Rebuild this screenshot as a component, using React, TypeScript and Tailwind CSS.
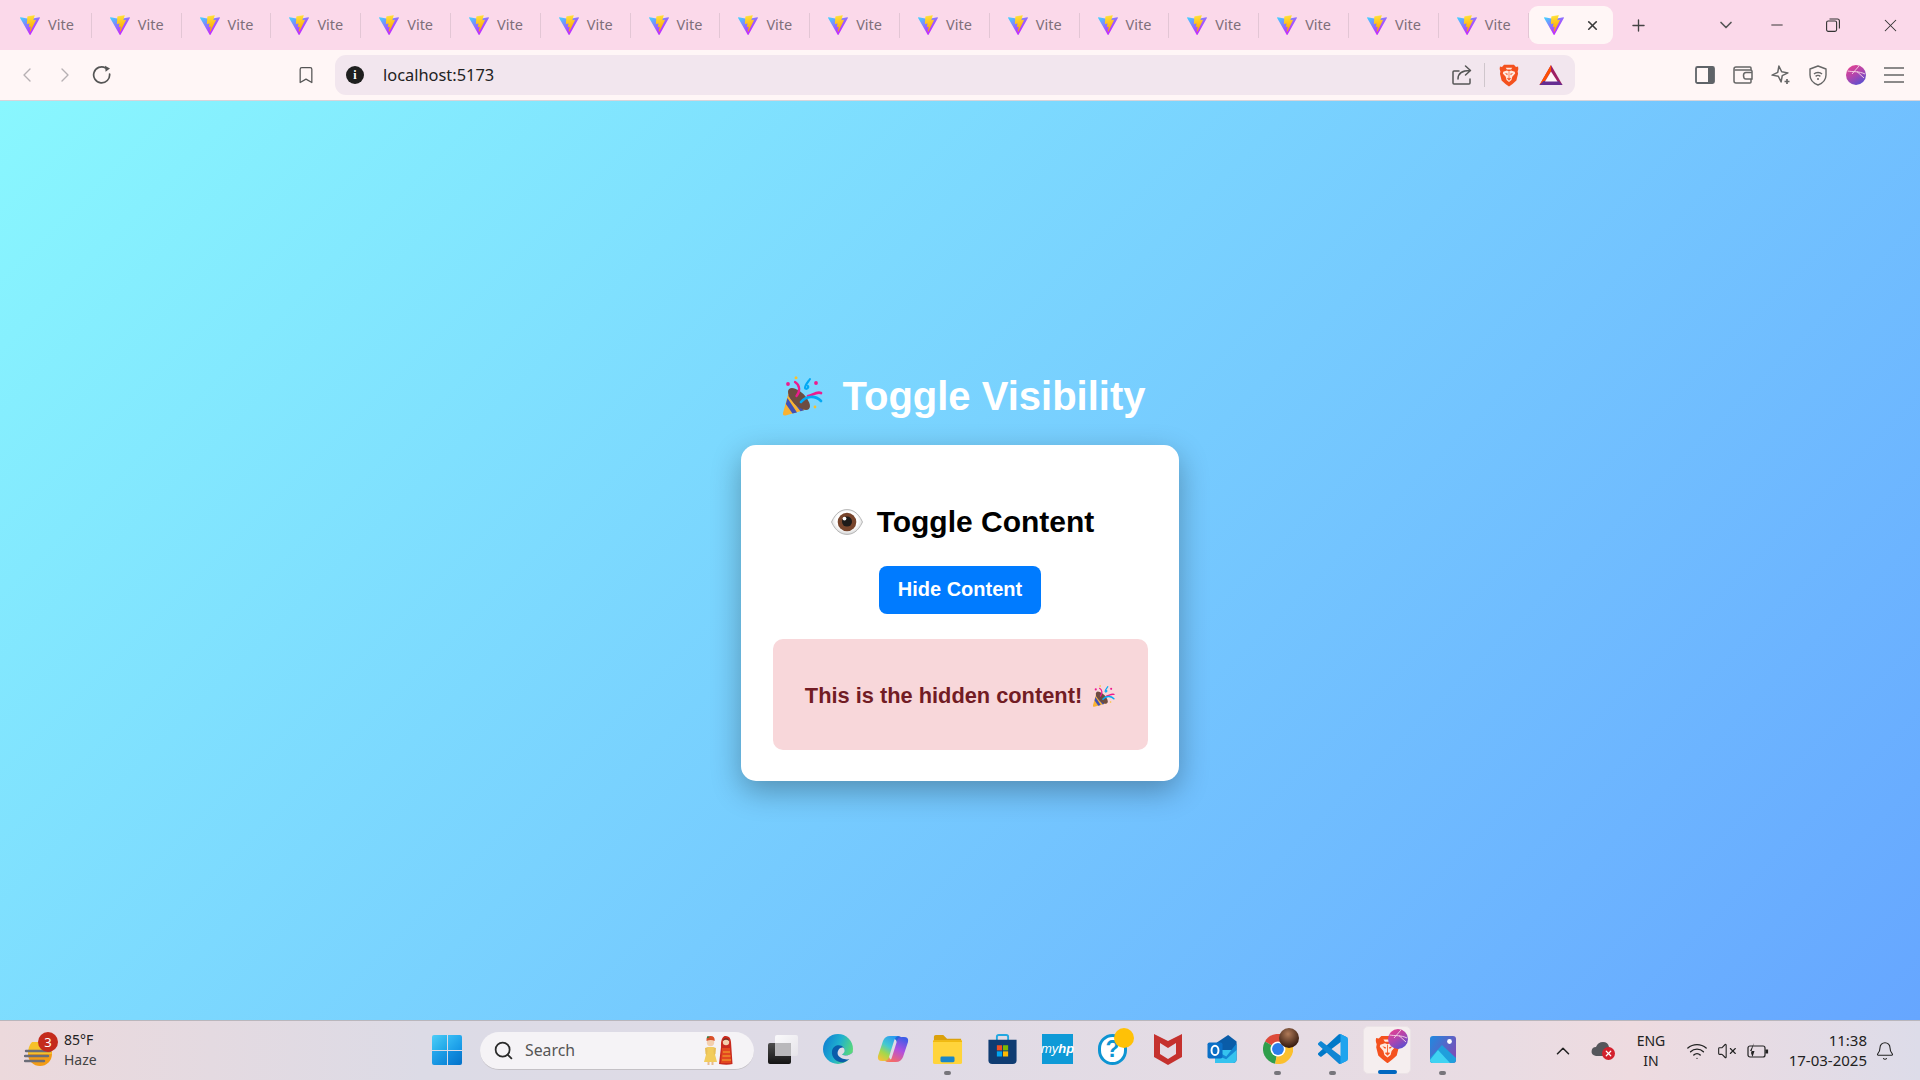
import React, { useId } from "react";
import { Bookmark, ChevronDown, ChevronLeft, ChevronRight, ChevronUp, Minus, Plus, Search, X, Bell, VolumeX, Wifi } from "lucide-react";

function ViteLogo({ size = 20 }: { size?: number }) {
  const id = useId();
  return (
    <svg width={size} height={size} viewBox="0 0 256 257" className="shrink-0">
      <defs>
        <linearGradient id={id + "a"} x1="-.828%" y1="7.652%" x2="57.636%" y2="78.411%">
          <stop offset="0" stopColor="#41D1FF" />
          <stop offset="1" stopColor="#BD34FE" />
        </linearGradient>
        <linearGradient id={id + "b"} x1="43.376%" y1="2.242%" x2="50.316%" y2="89.03%">
          <stop offset="0" stopColor="#FFEA83" />
          <stop offset=".083" stopColor="#FFDD35" />
          <stop offset="1" stopColor="#FFA800" />
        </linearGradient>
      </defs>
      <path fill={`url(#${id}a)`} d="M255.153 37.938 134.897 252.976c-2.483 4.44-8.862 4.466-11.382.048L.875 37.958c-2.746-4.814 1.371-10.646 6.827-9.67l120.385 21.517a6.537 6.537 0 0 0 2.322-.004l117.867-21.483c5.438-.991 9.574 4.796 6.877 9.62Z" />
      <path fill={`url(#${id}b)`} d="M185.432.063 96.44 17.501a3.268 3.268 0 0 0-2.634 3.014l-5.474 92.456a3.268 3.268 0 0 0 3.997 3.378l24.777-5.718c2.318-.535 4.413 1.507 3.936 3.838l-7.361 36.047c-.495 2.426 1.782 4.5 4.151 3.78l15.304-4.649c2.372-.72 4.652 1.36 4.15 3.788l-11.698 56.621c-.732 3.542 3.979 5.473 5.943 2.437l1.313-2.028 72.516-144.72c1.215-2.423-.88-5.186-3.54-4.672l-25.505 4.922c-2.396.462-4.435-1.77-3.759-4.114l16.646-57.705c.677-2.35-1.37-4.583-3.769-4.113Z" />
    </svg>
  );
}

function PartyEmoji({ size = 40 }: { size?: number }) {
  return (
    <svg width={size} height={size} viewBox="0 0 40 40" className="shrink-0">
      <path d="M6 15 L25 33 L2.5 39.5 Q-.5 40 0 37 Z" fill="#f9b233" />
      <path d="M4.4 22 L14 36.4 L9.5 37.6 L2.9 28 Z M7 16 L21 34.2 L17.5 35.3 L5.4 20 Z" fill="#3f51b5" />
      <ellipse cx="16" cy="23" rx="14" ry="6.6" transform="rotate(45 16 23)" fill="#6d4c41" />
      <path d="M12 6 C17 9 17.5 15 13.5 20" fill="none" stroke="#ec1c8e" strokeWidth="2.3" strokeLinecap="round" />
      <path d="M27 3 C25 6 22 9 22 12 C23 14 26 12 25 10" fill="none" stroke="#03a9f4" strokeWidth="2.1" strokeLinecap="round" />
      <path d="M25 20 C29 20 33 15 38 17" fill="none" stroke="#ec1c8e" strokeWidth="2.7" strokeLinecap="round" />
      <path d="M18 26 C23 20 32 19 38 25" fill="none" stroke="#03a9f4" strokeWidth="2.7" strokeLinecap="round" />
      <circle cx="5" cy="8" r="1.9" fill="#ec1c8e" />
      <circle cx="33" cy="7" r="1.9" fill="#ec1c8e" />
      <circle cx="13" cy="1.8" r="1.5" fill="#fbc02d" />
      <circle cx="32" cy="31" r="1.4" fill="#fbc02d" />
    </svg>
  );
}

function EyeEmoji() {
  return (
    <svg width="32" height="26" viewBox="0 0 32 26" className="shrink-0">
      <defs>
        <radialGradient id="eyeball" cx="50%" cy="45%" r="60%">
          <stop offset="0.6" stopColor="#ffffff" />
          <stop offset="1" stopColor="#c9c9c9" />
        </radialGradient>
      </defs>
      <path d="M.5 13 C5 3 11 .6 16 .6 C21 .6 27 3 31.5 13 C27 23 21 25.4 16 25.4 C11 25.4 5 23 .5 13 Z" fill="url(#eyeball)" stroke="#a8a8a8" strokeWidth=".8" />
      <circle cx="16" cy="13" r="9.3" fill="#78452c" />
      <circle cx="16" cy="12.6" r="5" fill="#1d1a19" />
      <circle cx="13.5" cy="9.6" r="1.9" fill="#fff" />
    </svg>
  );
}

function Tab() {
  return (
    <div className="w-[89.8px] h-[25px] shrink-0 flex items-center pl-[18px] border-r border-[#e3c6d5] font-['Noto_Sans',sans-serif]">
      <ViteLogo />
      <span className="ml-[8px] text-[14.5px] text-[#7d6f79]">Vite</span>
    </div>
  );
}

function BraveLion({ size = 24 }: { size?: number }) {
  return (
    <svg width={size} height={size * 1.15} viewBox="0 0 24 28" className="shrink-0">
      <path d="M6 1 H18 L20.5 3.5 L23 3 Q24 6 22.5 9 L23 12 L21 20 Q17 24 12 27.5 Q7 24 3 20 L1 12 L1.5 9 Q0 6 1 3 L3.5 3.5 Z" fill="#f4511e" />
      <path d="M5 9.5 L9.5 8 L12 9 L14.5 8 L19 9.5 L19.5 11.5 L16 15.5 L15 19.5 L12 22 L9 19.5 L8 15.5 L4.5 11.5 Z" fill="#ffe9df" />
      <path d="M8 4.5 L16 4.5 L14.5 6.6 L9.5 6.6 Z" fill="#ffe9df" />
      <path d="M7 11 L10.5 12 L9.8 13.6 Z M17 11 L13.5 12 L14.2 13.6 Z" fill="#f4511e" />
      <path d="M10 17.5 L14 17.5 L12 19.8 Z M12 9.5 V17.5" fill="#f4511e" stroke="#f4511e" strokeWidth=".8" />
    </svg>
  );
}

function BatIcon() {
  return (
    <svg width="24" height="22" viewBox="0 0 24 22" className="shrink-0">
      <path d="M12 1 L23.5 21 L.5 21 Z" fill="#9e1f63" />
      <path d="M12 1 L.5 21 L5.5 18 L12 7 Z" fill="#ff5000" />
      <path d="M.5 21 L23.5 21 L19.5 17 L4.5 17 Z" fill="#662d91" />
      <path d="M12 7.5 L18.5 17.5 L6 17.5 Z" fill="#fff6f6" />
    </svg>
  );
}

function SphereAvatar({ size }: { size: number }) {
  const id = useId();
  return (
    <svg width={size} height={size} viewBox="0 0 20 20" className="shrink-0">
      <defs>
        <linearGradient id={id} x1="0.1" y1="0" x2="0.7" y2="1">
          <stop offset="0" stopColor="#e8408e" />
          <stop offset=".5" stopColor="#b245ad" />
          <stop offset="1" stopColor="#5a4fd0" />
        </linearGradient>
      </defs>
      <circle cx="10" cy="10" r="10" fill={`url(#${id})`} />
      <path d="M1.5 6 C7 7 13 6 19 9 M13 1 C11 4 8 6 6 9 M11 6.6 L18 13" stroke="#f6d9e6" strokeWidth=".9" fill="none" />
    </svg>
  );
}

function TopBar() {
  return (
    <div className="h-[50px] bg-[#fbd9ea] flex items-center pl-[2px] shrink-0">
      {Array.from({ length: 17 }, (_, i) => (
        <Tab key={i} />
      ))}
      <div className="w-[84px] h-[38px] rounded-[9px] bg-[#fff6f6] flex items-center pl-[15px] shrink-0">
        <ViteLogo />
        <X size={15} strokeWidth={2.6} className="ml-[21px] text-[#3a3a3a]" />
      </div>
      <Plus size={19} strokeWidth={1.7} className="ml-[16px] text-[#444]" />
      <ChevronDown size={20} strokeWidth={2} className="ml-[68px] text-[#555]" />
      <Minus size={18} strokeWidth={1.3} className="ml-[32px] text-[#333]" />
      <svg width="14" height="14" viewBox="0 0 14 14" className="ml-[40px] text-[#333]" fill="none" stroke="currentColor" strokeWidth="1.1">
        <rect x=".6" y="3" width="10" height="10.4" rx="1.6" />
        <path d="M3.5 1 H11.5 Q13.4 1 13.4 3 V10.5" />
      </svg>
      <X size={21} strokeWidth={1.2} className="ml-[40px] text-[#333]" />
    </div>
  );
}

function Toolbar() {
  return (
    <div className="h-[51px] bg-[#fff6f6] border-b border-[#d8d4da] flex items-center shrink-0">
      <ChevronLeft size={24} strokeWidth={1.4} className="ml-[15px] text-[#b6b0b3]" />
      <ChevronRight size={24} strokeWidth={1.4} className="ml-[14px] text-[#b6b0b3]" />
      <svg width="20" height="20" viewBox="0 0 20 20" className="ml-[15px]" fill="none" stroke="#555" strokeWidth="1.7">
        <path d="M17.6 9 A8 8 0 1 1 13.6 2.9" strokeLinecap="round" />
        <path d="M13 .8 L18 3.6 L13.6 6.8 Z" fill="#555" stroke="none" />
      </svg>
      <Bookmark size={20} strokeWidth={1.5} className="ml-[184px] text-[#555]" />
      <div className="ml-[19px] w-[1240px] h-[40px] rounded-[11px] bg-[#f2e6ee] flex items-center">
        <div className="ml-[11px] w-[18px] h-[18px] rounded-full bg-[#1f1f1f] flex items-center justify-center text-white text-[12px] font-bold font-['Liberation_Serif']">i</div>
        <span className="ml-[19px] text-[16.4px] text-[#222] font-['Noto_Sans',sans-serif]">localhost:5173</span>
        <div className="ml-auto flex items-center">
          <svg width="20" height="22" viewBox="0 0 20 22" fill="none" stroke="#555" strokeWidth="1.5">
            <path d="M7 7 H2 Q1 7 1 8 V19 Q1 20 2 20 H17 Q18 20 18 19 V15" strokeLinecap="round" />
            <path d="M6 15 C6 9 10 6.5 18 6.5 M13.5 2 L18.5 6.5 L13.5 11" strokeLinecap="round" strokeLinejoin="round" />
          </svg>
          <div className="w-px h-[24px] bg-[#cfc6cc] ml-[12px] mr-[14px]" />
          <BraveLion size={20} />
          <div className="ml-[20px] mr-[12px]"><BatIcon /></div>
        </div>
      </div>
      <svg width="20" height="20" viewBox="0 0 20 20" className="ml-[120px]" fill="none">
        <rect x="1" y="2" width="18" height="16" rx="1.5" stroke="#5f6368" strokeWidth="1.8" />
        <rect x="13" y="2" width="6" height="16" fill="#5f6368" />
      </svg>
      <svg width="20" height="20" viewBox="0 0 20 20" className="ml-[18px]" fill="none" stroke="#666" strokeWidth="1.5">
        <path d="M18 5 V3 Q18 2 17 2 H3 Q1 2 1 4 V16 Q1 18 3 18 H17 Q18 18 18 17 V14" />
        <path d="M1.5 5 H17 Q19 5 19 6 V14 H13 Q10.5 14 10.5 10.5 Q10.5 7.5 13 7.5 H19" />
      </svg>
      <svg width="20" height="22" viewBox="0 0 20 22" className="ml-[18px]" fill="none" stroke="#666" strokeWidth="1.5">
        <path d="M9 2 L11 8 L17 10 L11 12 L9 18 L7 12 L1 10 L7 8 Z" strokeLinejoin="round" transform="rotate(-8 9 10)" />
        <path d="M16 15 V20 M13.5 17.5 H18.5" strokeWidth="1.7" />
      </svg>
      <svg width="18" height="21" viewBox="0 0 18 21" className="ml-[18px]" fill="none" stroke="#666" strokeWidth="1.4">
        <path d="M9 1 L17 4 V10 C17 15 13 18.5 9 20 C5 18.5 1 15 1 10 V4 Z" strokeLinejoin="round" />
        <path d="M5 9 C7 7 11 7 13 9 M6.6 11.4 C8 10.2 10 10.2 11.4 11.4" />
        <circle cx="9" cy="14" r="1" fill="#666" stroke="none" />
      </svg>
      <div className="ml-[19px]"><SphereAvatar size={20} /></div>
      <svg width="20" height="18" viewBox="0 0 20 18" className="ml-[18px]" stroke="#666" strokeWidth="1.5">
        <path d="M0 2 H20 M0 9 H20 M0 16 H20" />
      </svg>
    </div>
  );
}

function Cell({ children, dot, active }: { children: React.ReactNode; dot?: boolean; active?: boolean }) {
  return (
    <div className="w-[55px] h-full shrink-0 relative flex items-center justify-center pb-[3px]">
      {active && <div className="absolute left-[3px] top-[5px] w-[48px] h-[48px] rounded-[5px] bg-[#f5eeef] border border-[#ebe3e6]" />}
      <div className="relative flex items-center justify-center">{children}</div>
      {dot && <div className="absolute left-[24px] top-[50px] w-[7px] h-[4px] rounded-full bg-[#77757b]" />}
      {active && <div className="absolute left-[18px] top-[49px] w-[19px] h-[4px] rounded-full bg-[#0067c0]" />}
    </div>
  );
}

function TaskViewIcon() {
  return (
    <svg width="30" height="29" viewBox="0 0 30 29">
      <defs>
        <linearGradient id="tvA" x1="0" y1="0" x2="1" y2="1">
          <stop offset="0" stopColor="#ffffff" />
          <stop offset="1" stopColor="#e7e5ea" />
        </linearGradient>
        <linearGradient id="tvB" x1="0" y1="0" x2="0" y2="1">
          <stop offset="0" stopColor="#4d4d4d" />
          <stop offset="1" stopColor="#141414" />
        </linearGradient>
      </defs>
      <rect x="0" y="8" width="23" height="21" rx="2" fill="url(#tvB)" />
      <rect x="7" y="0" width="23" height="21" rx="2" fill="url(#tvA)" opacity=".85" />
      <rect x="7" y="8" width="16" height="13" fill="#b9b8bb" />
    </svg>
  );
}

function EdgeIcon() {
  return (
    <svg width="30" height="30" viewBox="0 0 30 30">
      <defs>
        <linearGradient id="edgeA" x1="0" y1="0.2" x2="1" y2="0.6">
          <stop offset="0" stopColor="#0f7ed2" />
          <stop offset=".5" stopColor="#1fb0cf" />
          <stop offset="1" stopColor="#5fdc72" />
        </linearGradient>
      </defs>
      <circle cx="15" cy="15" r="15" fill="url(#edgeA)" />
      <path d="M30 17.5 C29 21 23 22.5 18.5 20.5 C21.5 19 22 15.5 20.5 13.5 C17.5 9.5 10 11 9 17 C8 23 13 28.5 20 28.5 C26 27 30 22 30 17.5 Z" fill="#0a5cab" />
      <path d="M16.5 14.5 C14.5 16.5 14.8 21 18.5 23 C22 24.7 27 24 30 21 L30 30 L18 30 C22 28 13 28 12 21 C11.7 18 13.5 15 16.5 14.5 Z" fill="#0b66b8" opacity="0" />
      <path d="M20.5 13.8 C22.5 16 21.8 19 18.8 20.6 C22.5 22.4 27.5 21.5 30 18 C30.2 21 29.5 23 28.5 24.5 C24 26.5 17 25 15 21 C13.5 18 16.5 12.5 20.5 13.8 Z" fill="#dedbe6" />
    </svg>
  );
}

function CopilotIcon() {
  return (
    <svg width="32" height="28" viewBox="0 0 32 28">
      <defs>
        <linearGradient id="copA" x1="0.7" y1="0" x2="0.2" y2="1">
          <stop offset="0" stopColor="#2a9df0" />
          <stop offset=".4" stopColor="#45c9d0" />
          <stop offset=".7" stopColor="#a5d84a" />
          <stop offset="1" stopColor="#f5c13a" />
        </linearGradient>
        <linearGradient id="copB" x1="0.7" y1="0" x2="0.3" y2="1">
          <stop offset="0" stopColor="#3b5de8" />
          <stop offset=".5" stopColor="#b04fe0" />
          <stop offset="1" stopColor="#f46a6a" />
        </linearGradient>
        <linearGradient id="copC" x1="0" y1="0" x2="1" y2="0">
          <stop offset="0" stopColor="#1f7be0" />
          <stop offset="1" stopColor="#2a55d8" />
        </linearGradient>
      </defs>
      <path d="M13 1 H21 Q24 1 25 4 L27 10 H21 L19 5 Z" fill="url(#copC)" />
      <path d="M19 27 H10 Q8 27 7 24 L6 20 H11 L13 24 Z" fill="#f08a5a" />
      <path d="M13 1 H21 Q18 2 17 6 L12 22 Q11 26 7 26 H5 Q0 26 1 21 L6 6 Q8 1 13 1 Z" fill="url(#copA)" />
      <path d="M19 27 H11 Q14 26 15 22 L20 6 Q21 2 25 2 H27 Q32 2 31 7 L26 22 Q24 27 19 27 Z" fill="url(#copB)" />
    </svg>
  );
}

function FolderIcon() {
  return (
    <svg width="31" height="30" viewBox="0 0 31 32">
      <path d="M1 3 Q1 1 3 1 H11 L15 5 H30 V12 H1 Z" fill="#dba10b" />
      <path d="M0 7 H31 V30 Q31 32 29 32 H2 Q0 32 0 30 Z" fill="#ffd43b" />
      <path d="M0 7 H31 V8.5 H0 Z" fill="#f0b90f" />
      <rect x="8" y="24" width="15" height="6" rx="1.5" fill="#1a86c8" />
    </svg>
  );
}

function StoreIcon() {
  return (
    <svg width="29" height="30" viewBox="0 0 30 32">
      <path d="M9 7 V3 Q9 1 11 1 H19 Q21 1 21 3 V7" fill="none" stroke="#22a7e0" strokeWidth="2" />
      <path d="M0 6 H30 V28 Q30 32 26 32 H4 Q0 32 0 28 Z" fill="#0f3c72" />
      <rect x="9" y="12" width="5.5" height="5.5" fill="#f25022" />
      <rect x="15.5" y="12" width="5.5" height="5.5" fill="#7fba00" />
      <rect x="9" y="18.5" width="5.5" height="5.5" fill="#00a4ef" />
      <rect x="15.5" y="18.5" width="5.5" height="5.5" fill="#ffb900" />
    </svg>
  );
}

function McAfeeIcon() {
  return (
    <svg width="28" height="32" viewBox="0 0 28 32">
      <path d="M0 1 L14 8 L28 1 V24 L14 32 L0 24 Z M6 10 V21 L14 26 L22 21 V10 L14 15 Z" fill="#c5312e" fillRule="evenodd" />
    </svg>
  );
}

function OutlookIcon() {
  return (
    <svg width="31" height="30" viewBox="0 0 32 32">
      <path d="M10 9 L22 1 L31 8 V27 Q31 31 27 31 H8 V14 Z" fill="#0a5ca8" />
      <path d="M8 17 H31 V27 Q31 31 27 31 H8 Z" fill="#35c3ef" />
      <path d="M8 17 L20 24 L31 10 V17 L20 27 L8 22 Z" fill="#1488d4" />
      <rect x="0" y="9" width="16" height="17" rx="2" fill="#0b6fc6" />
      <ellipse cx="8" cy="17.5" rx="3.7" ry="5" fill="none" stroke="#fff" strokeWidth="2.1" />
    </svg>
  );
}

function ChromeIcon() {
  return (
    <svg width="30" height="30" viewBox="0 0 32 32">
      <path d="M16 16 L2.1 8 A16 16 0 0 1 29.9 8 Z" fill="#dd4a3a" />
      <path d="M16 16 L2.1 8 A16 16 0 0 0 13 31.7 Z" fill="#2f9e4b" />
      <path d="M16 16 L13 31.7 A16 16 0 0 0 29.9 8 Z" fill="#fbc02d" />
      <circle cx="16" cy="16" r="8" fill="#fff" />
      <circle cx="16" cy="16" r="6.3" fill="#2b7de9" />
    </svg>
  );
}

function VSCodeIcon() {
  return (
    <svg width="30" height="30" viewBox="0 0 100 100">
      <path fill="#0078c8" d="M96.4614 10.7962L75.8569 0.875542C73.4719 -0.272773 70.6217 0.211611 68.75 2.08333L1.29858 63.5832C-0.515693 65.2373 -0.513607 68.0937 1.30308 69.7452L6.81272 74.754C8.29793 76.1042 10.5347 76.2036 12.1338 74.9905L93.3609 13.3699C96.086 11.3026 100 13.2462 100 16.6667V16.4275C100 14.0265 98.6246 11.8378 96.4614 10.7962Z" />
      <path fill="#0f86d4" d="M96.4614 89.2038L75.8569 99.1245C73.4719 100.273 70.6217 99.7884 68.75 97.9167L1.29858 36.4169C-0.515693 34.7627 -0.513607 31.9063 1.30308 30.2548L6.81272 25.246C8.29793 23.8958 10.5347 23.7964 12.1338 25.0095L93.3609 86.6301C96.086 88.6974 100 86.7538 100 83.3334V83.5726C100 85.9735 98.6246 88.1622 96.4614 89.2038Z" />
      <path fill="#1fa4ee" d="M75.8578 99.1263C73.4721 100.274 70.6219 99.7885 68.75 97.9166C71.0564 100.223 75 98.5895 75 95.3278V4.67213C75 1.41039 71.0564 -0.223106 68.75 2.08329C70.6219 0.211402 73.4721 -0.273666 75.8578 0.873633L96.4587 10.7807C98.6234 11.8217 100 14.0112 100 16.4132V83.5871C100 85.9891 98.6234 88.1786 96.4586 89.2196L75.8578 99.1263Z" />
    </svg>
  );
}

function PhotosIcon() {
  return (
    <svg width="26" height="27" viewBox="0 0 26 27">
      <defs>
        <linearGradient id="ph" x1="0" y1="0" x2="1" y2="0.6">
          <stop offset="0" stopColor="#1f8ae0" />
          <stop offset="1" stopColor="#7a4fb8" />
        </linearGradient>
      </defs>
      <rect width="26" height="27" rx="3" fill="url(#ph)" />
      <path d="M0 22 L12 9 L26 22 V24 Q26 27 23 27 H3 Q0 27 0 24 Z" fill="#1f9fdc" />
      <path d="M0 24 L8 14 L20 27 H3 Q0 27 0 24 Z" fill="#3fd3f2" />
      <circle cx="19.5" cy="5.5" r="2.4" fill="#fff" />
    </svg>
  );
}

function Doodle() {
  return (
    <svg width="30" height="30" viewBox="0 0 30 30" className="ml-auto shrink-0">
      <path d="M5 12 H10 L14 27 H1 Z" fill="#f2cc5c" />
      <rect x="4.5" y="27" width="2" height="3" fill="#e8b98c" />
      <rect x="8.5" y="27" width="2" height="3" fill="#e8b98c" />
      <path d="M2 13 L5 12 L4 20 L2.5 19 Z M13 13 L10 12 L11 20 L12.5 19 Z" fill="#e8bf58" />
      <circle cx="7.5" cy="7.5" r="3.7" fill="#f3cfae" />
      <path d="M3.5 6 Q3 1.5 7 1 Q12 .5 11.7 6 Q8 3.8 3.5 6 Z" fill="#d9502a" />
      <path d="M3.5 3.5 L4.5 1 L7 2 Z" fill="#2d7d46" />
      <path d="M21.5 1 Q27.5 0 28 7 L29.5 29 Q24 30.5 16 29 L18 12 Q17.5 3 21.5 1 Z" fill="#c92a1e" />
      <circle cx="23" cy="7" r="3.2" fill="#f3cfae" />
      <path d="M20 4.5 Q23 1.5 26 4.5 L26 6 Q23 3.5 20 6 Z" fill="#7d2a1e" />
      <path d="M19 13 H27 L28 28 H18 Z" fill="#e2471f" />
      <path d="M20 17 H27 M19.5 21 H27.5 M19 25 H28" stroke="#f5b12e" strokeWidth="1" />
    </svg>
  );
}

function Taskbar() {
  return (
    <div className="h-[60px] shrink-0 border-t border-[#b9b6bc] bg-[linear-gradient(90deg,#ecd9dc_0%,#dcdbe6_22%,#dfdbe6_45%,#e9dce3_78%,#eedbe0_85%,#dddce9_100%)] flex items-center font-['Noto_Sans',sans-serif] text-[#222]">
      <div className="w-[420px] h-full shrink-0 flex items-center pl-[24px]">
        <div className="relative w-[28px] h-[34px]">
          <svg width="28" height="34" viewBox="0 0 28 34" className="absolute left-0 top-0">
            <ellipse cx="16" cy="20" rx="12" ry="12" fill="#f29b15" />
            <path d="M8 8 H20 Q26 12 28 20 H4 Q4 12 8 8 Z" fill="#f6c12a" />
            <path d="M2 17 H26 M1 22 H24 M1 27 H20" stroke="#6b6d78" strokeWidth="2.4" strokeLinecap="round" />
          </svg>
          <div className="absolute left-[14px] -top-[2px] w-[20px] h-[20px] rounded-full bg-[#c42b1c] text-white text-[13px] leading-[20px] text-center">3</div>
        </div>
        <div className="ml-[12px] text-[14px] leading-[20px] -mt-[2px]">
          <div>85°F</div>
          <div className="text-[#444]">Haze</div>
        </div>
      </div>
      <div className="w-[60px] shrink-0 flex justify-start pl-[12px] pb-[1px]">
        <div className="grid grid-cols-2 gap-[1px] w-[30px] h-[30px]">
          <div className="bg-[linear-gradient(135deg,#4fcdf8,#1aa4e6)] rounded-tl-[2px]" />
          <div className="bg-[linear-gradient(135deg,#38bdf5,#1394e4)] rounded-tr-[2px]" />
          <div className="bg-[linear-gradient(135deg,#28aaee,#0c86d8)] rounded-bl-[2px]" />
          <div className="bg-[linear-gradient(135deg,#1592e3,#0472c9)] rounded-br-[2px]" />
        </div>
      </div>
      <div className="w-[274px] h-[38px] shrink-0 rounded-full bg-[#f5f3f6] border-b border-[#c4c1c6] flex items-center pl-[13px] pr-[21px]">
        <Search size={21} strokeWidth={2} className="text-[#2a2a2a]" />
        <span className="ml-[11px] text-[15.8px] text-[#555] mt-[1px]">Search</span>
        <Doodle />
      </div>
      <div className="w-[1px] shrink-0" />
      <Cell><TaskViewIcon /></Cell>
      <Cell><EdgeIcon /></Cell>
      <Cell><CopilotIcon /></Cell>
      <Cell dot><FolderIcon /></Cell>
      <Cell><StoreIcon /></Cell>
      <Cell>
        <div className="w-[31px] h-[30px] bg-[#0e9ad7] flex items-center justify-center text-white text-[13px] italic font-['Liberation_Sans']">my<span className="font-bold">hp</span></div>
      </Cell>
      <Cell>
        <div className="relative w-[29px] h-[31px] rounded-full border-[3px] border-[#0d94d2] bg-white flex items-center justify-center text-[#0d94d2] text-[23px] font-bold font-['Liberation_Sans']">
          ?
          <div className="absolute -right-[10px] -top-[9px] w-[20px] h-[20px] rounded-full bg-[#ffc107]" />
        </div>
      </Cell>
      <Cell><McAfeeIcon /></Cell>
      <Cell><OutlookIcon /></Cell>
      <Cell dot>
        <ChromeIcon />
        <div className="absolute -right-[6px] -top-[6px] w-[20px] h-[20px] rounded-full bg-[radial-gradient(circle_at_45%_30%,#b07a58,#3b1f12_72%)]" />
      </Cell>
      <Cell dot><VSCodeIcon /></Cell>
      <Cell active>
        <BraveLion size={25} />
        <div className="absolute -right-[8px] -top-[6px]"><SphereAvatar size={20} /></div>
      </Cell>
      <Cell dot><PhotosIcon /></Cell>
      <div className="ml-[81px] w-[24px] flex justify-center shrink-0">
        <ChevronUp size={22} strokeWidth={1.7} className="text-[#222]" />
      </div>
      <div className="relative ml-[16px] w-[24px] h-[20px] shrink-0">
        <svg width="22" height="16" viewBox="0 0 22 16" className="absolute left-0 top-0">
          <path d="M5 15 Q0 14 .6 10 Q1 6 5 6 Q7 1 12 1 Q17 1 18 6 Q21 8 20 12 L18 15 Z" fill="#55565b" />
        </svg>
        <div className="absolute left-[11px] top-[6px] w-[13px] h-[13px] rounded-full bg-[#d3202d] text-white flex items-center justify-center">
          <X size={9} strokeWidth={3.2} />
        </div>
      </div>
      <div className="ml-[16px] w-[40px] shrink-0 text-center text-[14px] leading-[20px]">
        <div>ENG</div>
        <div>IN</div>
      </div>
      <Wifi size={22} strokeWidth={1.5} className="ml-[15px] text-[#222]" />
      <VolumeX size={20} strokeWidth={1.3} className="ml-[9px] text-[#222]" />
      <svg width="22" height="16" viewBox="0 0 22 16" className="ml-[10px]" fill="none" stroke="#222" strokeWidth="1.2">
        <rect x="1" y="3" width="17" height="11" rx="2" />
        <path d="M18.5 7 H20.5 V10 H18.5" fill="#222" />
        <path d="M7 0 L3 8 H7.5 L5.5 14 L4 10" fill="#222" stroke="none" />
      </svg>
      <div className="ml-[11px] w-[87px] shrink-0 text-right text-[15px] leading-[20px] -mt-[2px]">
        <div>11:38</div>
        <div>17-03-2025</div>
      </div>
      <Bell size={20} strokeWidth={1.3} className="ml-[8px] text-[#222]" />
    </div>
  );
}

export default function App() {
  return (
    <div className="w-screen h-screen flex flex-col overflow-hidden font-['Liberation_Sans',sans-serif]">
      <TopBar />
      <Toolbar />
      <main className="flex-1 min-h-0 bg-[linear-gradient(135deg,#89f7fe_0%,#66a6ff_100%)] flex flex-col items-center pt-[272px]">
        <h1 className="h-[46px] flex items-center gap-[19px] pl-[9px] text-[40px] leading-[46px] font-bold text-white">
          <PartyEmoji />
          <span>Toggle Visibility</span>
        </h1>
        <div className="mt-[26px] w-[438px] h-[336px] bg-white rounded-[15px] shadow-[0_10px_30px_rgba(0,0,0,0.3)] px-[32px] pt-[60px] flex flex-col items-center">
          <h2 className="h-[34px] flex items-center gap-[14px] pl-[5px] text-[30px] leading-[34px] font-bold text-black">
            <EyeEmoji />
            <span>Toggle Content</span>
          </h2>
          <button className="mt-[27px] w-[162px] h-[48px] pb-[2px] rounded-[8px] bg-[#007bff] text-white text-[20px] font-bold">Hide Content</button>
          <div className="mt-[25px] w-[375px] h-[111px] pt-[3px] rounded-[10px] bg-[#f8d7da] text-[#721c24] text-[21.8px] font-bold flex items-center justify-center gap-[11px]">
            <span>This is the hidden content!</span>
            <PartyEmoji size={22} />
          </div>
        </div>
      </main>
      <Taskbar />
    </div>
  );
}
